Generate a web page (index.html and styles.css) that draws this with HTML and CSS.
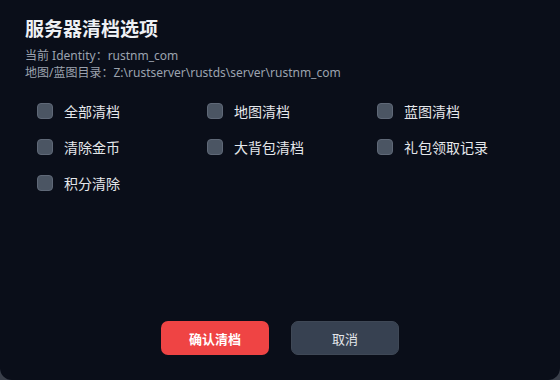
FILE: index.html
```html
<!DOCTYPE html>
<html lang="zh-CN">
<head>
    <meta charset="UTF-8">
    <meta name="viewport" content="width=device-width, initial-scale=1.0">
    <title>服务器清档选项</title>
    <link rel="stylesheet" href="styles.css">
</head>
<body>
    <div class="dialog">
        <h1 class="title">服务器清档选项</h1>
        <div class="info">
            <p>当前 Identity：rustnm_com</p>
            <p>地图/蓝图目录：Z:\rustserver\rustds\server\rustnm_com</p>
        </div>

        <div class="options">
            <label class="option"><span class="box"></span>全部清档</label>
            <label class="option"><span class="box"></span>地图清档</label>
            <label class="option"><span class="box"></span>蓝图清档</label>
            <label class="option"><span class="box"></span>清除金币</label>
            <label class="option"><span class="box"></span>大背包清档</label>
            <label class="option"><span class="box"></span>礼包领取记录</label>
            <label class="option"><span class="box"></span>积分清除</label>
        </div>

        <div class="actions">
            <button class="btn btn-danger">确认清档</button>
            <button class="btn btn-cancel">取消</button>
        </div>
    </div>
</body>
</html>
```

FILE: styles.css
```css
* {
    margin: 0;
    padding: 0;
    box-sizing: border-box;
}

body {
    width: 560px;
    height: 380px;
    background: #3a3f4a;
    font-family: "Noto Sans", "Noto Sans CJK SC", sans-serif;
    overflow: hidden;
}

.dialog {
    width: 560px;
    height: 380px;
    background: #0a0e19;
    border-radius: 0 0 12px 12px;
    display: flex;
    flex-direction: column;
    padding: 16px 25px 25px;
}

.title {
    font-size: 19px;
    font-weight: bold;
    line-height: 26px;
    color: #eef0f4;
}

.info {
    margin-top: 5px;
    font-size: 12px;
    line-height: 17px;
    color: #9ca3af;
}

.options {
    display: grid;
    grid-template-columns: repeat(3, 170px);
    row-gap: 16px;
    margin: 20px 0 0 12px;
}

.option {
    display: flex;
    align-items: center;
    gap: 11px;
    height: 20px;
    font-size: 14px;
    color: #e5e7eb;
    cursor: pointer;
}

.box {
    width: 16px;
    height: 16px;
    border-radius: 4px;
    background: #4b5563;
    border: 1px solid #5f6877;
}

.actions {
    margin-top: auto;
    display: flex;
    justify-content: center;
    gap: 22px;
}

.btn {
    width: 108px;
    height: 34px;
    border-radius: 7px;
    font-family: inherit;
    font-size: 13px;
    cursor: pointer;
}

.btn-danger {
    background: #ef4444;
    border: none;
    color: #fff;
    font-weight: bold;
}

.btn-cancel {
    background: #374151;
    border: 1px solid #3f4856;
    color: #e5e7eb;
}
```
